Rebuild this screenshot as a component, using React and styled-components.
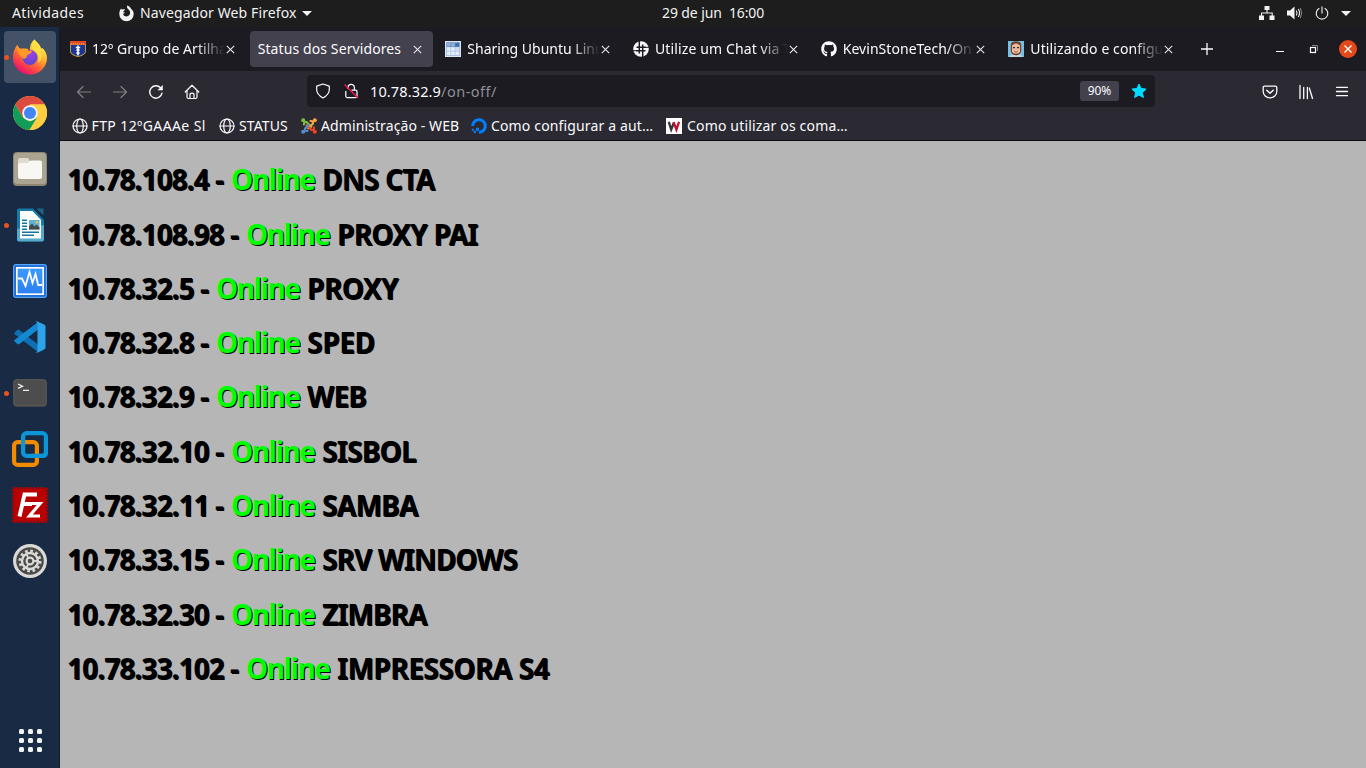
import React from "react";
import styled, { createGlobalStyle } from "styled-components";
import { FaGithub, FaDigitalOcean } from "react-icons/fa";

const GlobalStyle = createGlobalStyle`
  * { box-sizing: border-box; }
  body { margin: 0; overflow: hidden; font-family: "Noto Sans", "Open Sans", sans-serif; font-size: 14px; color: #fbfbfe; }
  svg { display: block; flex: none; }
`;

const Desktop = styled.div`
  width: 1366px;
  height: 768px;
  display: flex;
  flex-direction: column;
  background: #1d1d1d;
`;

const Text = styled.span`
  white-space: nowrap;
  letter-spacing: ${(p) => p.$track || 0}px;
  font-size: ${(p) => p.$size || 14}px;
  color: ${(p) => p.$color || "inherit"};
`;

/* ---------- GNOME top bar ---------- */

const TopBar = styled.header`
  height: 27px;
  display: grid;
  grid-template-columns: 650px auto 1fr;
  align-items: center;
  line-height: 26px;
  background: #1d1d1d;
  color: #f2f2f2;
  padding: 0 15px 1px 12px;
`;
const TopLeft = styled.div`
  display: flex;
  align-items: center;
`;
const AppMenu = styled.div`
  display: flex;
  align-items: center;
  gap: 5px;
  margin-left: 34px;
`;
const TopRight = styled.div`
  display: flex;
  align-items: center;
  justify-content: flex-end;
  gap: 12px;
`;

/* ---------- Dock ---------- */

const Body = styled.div`
  flex: 1;
  display: flex;
  min-height: 0;
`;
const Dock = styled.nav`
  width: 60px;
  background: #192a44;
  border-right: 1px solid #151a24;
  padding: 4px 3px 0 4px;
  display: flex;
  flex-direction: column;
  gap: 4px;
`;
const DockItem = styled.div`
  position: relative;
  width: 52px;
  height: 52px;
  flex: none;
  border-radius: 4px;
  display: flex;
  align-items: center;
  justify-content: center;
  background: ${(p) => (p.$active ? "#445267" : "transparent")};
  &::before {
    content: "";
    display: ${(p) => (p.$running ? "block" : "none")};
    position: absolute;
    left: 0;
    top: 24px;
    width: 5px;
    height: 5px;
    border-radius: 50%;
    background: #e95420;
  }
`;
const AppsButton = styled(DockItem)`
  margin-top: auto;
  margin-bottom: 2px;
`;
const DotGrid = styled.div`
  display: grid;
  grid-template-columns: repeat(3, 5px);
  grid-auto-rows: 5px;
  gap: 4px;
`;
const Dot = styled.i`
  border-radius: 1.5px;
  background: #f4f4f4;
`;

/* ---------- Browser ---------- */

const Browser = styled.main`
  flex: 1;
  min-width: 0;
  display: flex;
  flex-direction: column;
`;
const TabStrip = styled.div`
  height: 44px;
  background: #1c1b22;
  display: flex;
  align-items: center;
  padding: 0 9px 0 2px;
`;
const TabList = styled.div`
  display: flex;
  gap: 4px;
  width: 1122px;
`;
const Tab = styled.div`
  flex: 1 1 0;
  min-width: 0;
  height: 36px;
  padding: 0 11px 0 8px;
  border-radius: 4px;
  display: flex;
  align-items: center;
  background: ${(p) => (p.$active ? "#42414d" : "transparent")};
`;
const Favicon = styled.span`
  width: 16px;
  height: 16px;
  flex: none;
  margin-right: 6px;
`;
const TabTitle = styled.div`
  flex: 1;
  min-width: 0;
  overflow: hidden;
  line-height: 20px;
  padding-bottom: 1px;
  mask-image: ${(p) => (p.$fade ? "linear-gradient(to left, transparent 1px, #000 30px)" : "none")};
`;
const NewTab = styled.div`
  width: 46px;
  display: flex;
  justify-content: center;
`;
const WindowButtons = styled.div`
  margin-left: auto;
  display: flex;
  align-items: center;
  gap: 24px;
`;
const CloseWindow = styled.span`
  width: 18px;
  height: 18px;
  margin-left: -4px;
  border-radius: 50%;
  background: #e4491a;
  display: grid;
  place-items: center;
`;

const NavBar = styled.div`
  height: 41px;
  background: #2b2a33;
  display: flex;
  align-items: center;
  padding: 0 16px;
`;
const ButtonGroup = styled.div`
  display: flex;
  gap: 20px;
`;
const UrlBar = styled.div`
  width: 848px;
  height: 32px;
  margin: 0 auto 1px 107px;
  border-radius: 4px;
  background: #1c1b22;
  display: flex;
  align-items: center;
  gap: 12px;
  padding: 0 8px;
`;
const UrlText = styled.div`
  flex: 1;
  margin-left: -1px;
  line-height: 20px;
`;
const ZoomBadge = styled.span`
  width: 39px;
  height: 20px;
  border-radius: 3px;
  background: #42414d;
  font-size: 12px;
  line-height: 20px;
  text-align: center;
`;
const Bookmarks = styled.div`
  height: 29px;
  background: #2b2a33;
  border-bottom: 1px solid #0c0c0d;
  display: flex;
  align-items: center;
  padding: 0 12px;
  gap: 12px;
`;
const Bookmark = styled.div`
  display: flex;
  align-items: center;
  gap: ${(p) => p.$gap || 4}px;
  line-height: 20px;
  width: ${(p) => p.$width}px;
`;

/* ---------- Page ---------- */

const Page = styled.section`
  flex: 1;
  background: #b6b6b6;
  padding: 19.3px 7px 0;
  color: #000;
`;
const ServerLine = styled.h1`
  margin: 0 0 19.3px;
  height: 35px;
  line-height: 39px;
  font-size: 28px;
  font-weight: 700;
  white-space: nowrap;
  text-shadow: 1px 1px 0 #000;
  display: flex;
`;
const Address = styled.span`
  width: ${(p) => p.$width}px;
  letter-spacing: -0.92px;
`;
const Status = styled.span`
  width: 91px;
  color: #0f0;
  letter-spacing: -1.4px;
`;
const ServerName = styled.span`
  letter-spacing: ${(p) => p.$track}px;
`;

/* ---------- Icons ---------- */

const Stroke = ({ size = 16, children, color = "#fbfbfe", w = 1.2, opacity = 1 }) => (
  <svg width={size} height={size} viewBox="0 0 16 16" fill="none" stroke={color} strokeWidth={w} strokeLinecap="round" strokeLinejoin="round" opacity={opacity}>
    {children}
  </svg>
);

const CloseX = () => (
  <svg width="9" height="9" viewBox="0 0 9 9" stroke="#e6e6ea" strokeWidth="1.1">
    <path d="M.8.8l7.4 7.4M8.2.8L.8 8.2" />
  </svg>
);

const FirefoxSymbolic = () => (
  <svg width="17" height="17" viewBox="0 0 17 17">
    <path fill="#f2f2f2" d="M9.2.5c2.9 1 3.2 2.3 4 3.5 1.6 1.4 2.5 3 2.5 5.1a7.2 7.2 0 0 1-14.4 0c0-2.3.6-4.1 1.7-5.6.2.6.5.9 1 1.1C5 4.100 6 4.200 7 4.600c-.2.9-.9 1.300-1.800 1.800.2 1 .9 1 1.800 1.100-.3.9-1.100.9-1.900 1.400.6 1.800 2 2.500 3.500 2.500 2.100 0 3.500-1.500 3.500-3.600 0-2-.9-2.700-2.100-3.800C9.100 3 8.700 2 9.200.5z" />
  </svg>
);

const FirefoxLogo = () => (
  <svg width="36" height="36" viewBox="0 0 36 36">
    <defs>
      <linearGradient id="ffBody" x1=".8" y1=".1" x2=".25" y2=".95">
        <stop offset="0" stopColor="#fff14f" />
        <stop offset=".35" stopColor="#ffae2c" />
        <stop offset=".65" stopColor="#ff5a3a" />
        <stop offset="1" stopColor="#ee0d6e" />
      </linearGradient>
      <radialGradient id="ffGlobe" cx=".5" cy=".25" r=".8">
        <stop offset="0" stopColor="#a341e8" />
        <stop offset="1" stopColor="#5249c9" />
      </radialGradient>
    </defs>
    <path fill="url(#ffBody)" d="M22.500.5c1 1.500 5.500 4.500 6.800 9 .7.300 1.300-.5 1.300-.5 3 3 4.400 7 4.400 10A17 16.600 0 0 1 1 19C1 13 2.700 9.500 5.200 5.800L7.500 10l7.500-.5 3 3c-.5-4 .5-9 4.500-12z" />
    <circle cx="18" cy="18.500" r="7.500" fill="url(#ffGlobe)" />
    <path fill="#ff9a25" d="M5.200 5.800C6 8 7 9.200 8.700 9.700c2-.6 4.800-.2 6.800 1.700l4.600.700c-.6 2.600-3.300 2.900-5.300 4.400.3 1.500-.7 2.800-2.800 3.400C8 17.500 4.500 13 5.200 5.800z" />
    <path fill="#ffe141" fillOpacity=".8" d="M22.500.5c2.500 4 7.500 7.500 7.500 15.500 0 4-2 7-4 8 1.500-5 .5-9-5-13.500C18.800 8.500 19.500 4 22.500.5z" />
  </svg>
);

const ChromeLogo = () => (
  <svg width="34" height="34" viewBox="0 0 34 34">
    <circle cx="17" cy="17" r="17" fill="#ffcd40" />
    <path fill="#dd4b3e" d="M2.300 8.500A17 17 0 0 1 31.700 8.500H17L9.600 21.300z" />
    <path fill="#109d58" d="M2.300 8.500L9.600 21.300 17 25.500 24.400 21.200 16.500 34A17 17 0 0 1 2.300 8.500z" />
    <path fill="#ffcd40" d="M31.700 8.500A17 17 0 0 1 16.500 34L24.400 21.200 17 8.500z" />
    <circle cx="17" cy="17" r="7.800" fill="#f3f3f3" />
    <circle cx="17" cy="17" r="6" fill="#4285f4" />
  </svg>
);

const FilesIcon = () => (
  <svg width="34" height="34" viewBox="0 0 34 34">
    <rect width="34" height="34" rx="4" fill="#8d8673" />
    <rect x="1" y="1" width="32" height="31" rx="3.500" fill="#aaa490" />
    <path fill="#dedbd0" d="M5 8q0-2 2-2h7q2 0 2.500 2.500L18 10v6H5z" />
    <path fill="#f8f7f4" d="M5 13q0-2 2-2h6q2 0 3.500-1.500T19 8.500h8q2 0 2 2V25q0 2-2 2H7q-2 0-2-2z" />
  </svg>
);

const WriterIcon = () => (
  <svg width="36" height="36" viewBox="0 0 36 36">
    <path fill="#147ba7" d="M7 1.500h14L32 13v19.500a2 2 0 0 1-2 2H7a2 2 0 0 1-2-2v-29a2 2 0 0 1 2-2z" />
    <path fill="#74bdd9" d="M5 22v10.500a2 2 0 0 0 2 2h23a2 2 0 0 0 2-2V18z" fillOpacity=".7" />
    <path fill="#fbfcfc" d="M8 4h12.500L29 13v18.500H8z" />
    <path fill="#1d6486" d="M24.500 1.500h7V8.500z" />
    <path stroke="#18739d" strokeWidth="1.400" d="M10 13.200h5M10 16.200h5M10 19.200h5M10 22.200h5M10 25.200h17M10 28.200h12" />
    <rect x="17" y="13" width="10.500" height="9.500" fill="#5fb1d7" />
    <path fill="#454a4d" d="M17 22.500v-3l3-3 2.500 3 2-2 3 3v2z" />
    <circle cx="25" cy="15.300" r="1.300" fill="#f5c74c" />
  </svg>
);

const MonitorIcon = () => (
  <svg width="34" height="34" viewBox="0 0 34 34">
    <defs>
      <linearGradient id="mon" x1="0" y1="0" x2="0" y2="1">
        <stop offset="0" stopColor="#3b9bff" />
        <stop offset="1" stopColor="#2d7ff0" />
      </linearGradient>
    </defs>
    <rect width="34" height="34" rx="2.500" fill="#1768d8" />
    <rect x=".7" y=".7" width="32.600" height="32.600" rx="2" fill="none" stroke="#69b5f7" strokeWidth="1" />
    <rect x="3.800" y="3.800" width="26.400" height="26.400" fill="url(#mon)" stroke="#fff" strokeWidth="1.700" />
    <path fill="none" stroke="#fff" strokeWidth="1.800" d="M5 14.500h4l3.500 7.500 4-14 3 11 3-9 2.700 11h4" />
  </svg>
);

const CodeIcon = () => (
  <svg width="34" height="34" viewBox="0 0 34 34">
    <path fill="#0f6fb5" d="M1.500 12.500l2.800-2.500q1-.8 2 0L25 24.500V32L1.500 14q-.8-.8 0-1.500z" />
    <path fill="#1389d2" d="M1.500 21.500l2.800 2.500q1 .8 2 0L25 9.500V2L1.500 20q-.8.800 0 1.500z" />
    <path fill="#2ea3ea" d="M24 32.500q-1 .2-1.500-.5 2 .5 2-1.500v-27q0-2-2-1.500.8-1 2-.5l7 3.200q1 .6 1 1.800v21q0 1.200-1 1.800l-6.500 3.200z" />
  </svg>
);

const TerminalIcon = () => (
  <svg width="34" height="28" viewBox="0 0 34 28">
    <rect width="34" height="28" rx="3.500" fill="#3b3b3b" />
    <rect x=".8" y=".8" width="32.400" height="26" rx="3" fill="#4d4d4d" stroke="#626262" strokeWidth=".8" />
    <path d="M5 5l4.500 2.200L5 9.400M10 11.400h6" fill="none" stroke="#eee" strokeWidth="1.300" />
  </svg>
);

const VmwareIcon = () => (
  <svg width="36" height="36" viewBox="0 0 36 36" fill="none" strokeWidth="4.200">
    <rect x="11.100" y="2.100" width="22.800" height="22.800" rx="3.500" stroke="#0c95d7" />
    <rect x="2.100" y="11.100" width="22.800" height="22.800" rx="3.500" stroke="#f38b00" />
    <path d="M20 24.900h10.400q3.500 0 3.500-3.500" stroke="#0c95d7" />
    <path d="M11.100 9v6" stroke="#0c95d7" />
  </svg>
);

const FilezillaIcon = () => (
  <svg width="36" height="36" viewBox="0 0 36 36">
    <rect x="1.500" y="1.500" width="33" height="33" fill="#b80000" />
    <rect x="1" y="1" width="34" height="34" fill="none" stroke="#b80000" strokeWidth="1.800" strokeDasharray="2 1.400" />
    <g fill="none" stroke="#fff" strokeLinejoin="miter">
      <path strokeWidth="4" d="M7.500 29.500L12.500 7.500H25M10.500 17H20" />
      <path strokeWidth="3.200" d="M17.500 16.500H28L17.500 29H28" />
    </g>
  </svg>
);

const SettingsIcon = () => (
  <svg width="34" height="34" viewBox="0 0 34 34">
    <circle cx="17" cy="17" r="17" fill="#d9d9d7" />
    <circle cx="17" cy="17" r="13.800" fill="#4a4a48" />
    <circle cx="17" cy="17" r="10" fill="none" stroke="#d9d9d7" strokeWidth="3" strokeDasharray="2.600 2.636" />
    <circle cx="17" cy="17" r="8" fill="none" stroke="#d9d9d7" strokeWidth="2.400" />
    <circle cx="17" cy="17" r="3.400" fill="none" stroke="#d9d9d7" strokeWidth="2.200" />
    <path stroke="#d9d9d7" strokeWidth="1.800" d="M20 17h5M15.500 19.600l-2 4M15.500 14.400l-2-4" />
  </svg>
);

const CrestFavicon = () => (
  <svg width="16" height="16" viewBox="0 0 16 16">
    <path fill="#d8b73a" d="M0 3h16v7q0 4-8 6-8-2-8-6z" />
    <path fill="#1c3597" d="M.8 4h14.400v6q0 3.500-7.200 5.200Q.8 13.500.8 10z" />
    <path fill="#e5472d" d="M0 0h16v3.600H0z" />
    <path stroke="#f5c451" strokeWidth=".8" strokeDasharray="1 1" d="M1 2.700h14" />
    <path stroke="#fff" strokeWidth="1.600" d="M8 4.500v10M5.800 6.500h4.400M6.300 9h3.400M6.300 12h3.400" />
  </svg>
);
const GridFavicon = () => (
  <svg width="16" height="16" viewBox="0 0 16 16">
    <rect x=".5" y=".5" width="15" height="15" fill="#a9c0de" stroke="#dce7f3" />
    <path fill="#5d87bd" d="M1.500 1.500h13V6h-13z" />
    <g fill="#e3edf7">
      <path fillOpacity=".4" d="M2 2h3.500v3.500H2zM6.200 2h3.500v3.500H6.200z" />
      <path d="M2 6.200h3.500v3.500H2zM6.200 6.200h3.500v3.500H6.200zM2 10.400h3.500V14H2zM6.200 10.400h3.500V14H6.200zM10.400 10.400H14V14h-3.600z" />
      <path fillOpacity=".7" d="M10.400 6.200H14v3.500h-3.600z" />
    </g>
    <path fill="#3e70b0" d="M10.400 2H14v3.500h-3.600z" />
  </svg>
);
const HashFavicon = () => (
  <svg width="16" height="16" viewBox="0 0 16 16">
    <circle cx="8" cy="8" r="7.800" fill="#fbfbfe" />
    <path stroke="#1c1b22" strokeWidth="1.500" d="M6.300 0v12.500M9.700 3.500V16M3.500 6.300h9.500M3 9.700h9.500" />
    <path stroke="#1c1b22" strokeWidth="1" d="M0 9.700h3M13 6.300h3" />
  </svg>
);
const AvatarFavicon = () => (
  <svg width="16" height="16" viewBox="0 0 16 16">
    <rect width="16" height="16" fill="#78bfe6" />
    <path fill="#c9d6de" d="M1.500 16q1-3 6.500-3t6.500 3z" />
    <path fill="#70452f" d="M2.800 4q0-3.700 5.200-3.700T13.200 4v6q-1 4.300-5.200 4.300T2.800 10z" />
    <path fill="#eeb99a" d="M4 4.500q2-2 4-2t4 2v5.800q-.5 2.300-4 2.300t-4-2.300z" />
    <path fill="#3c2a22" d="M5 6h2v1.200H5zM9 6h2v1.200H9z" />
    <path fill="#b5654f" d="M6.300 10.200h3.400v1H6.300z" />
  </svg>
);
const Globe = () => (
  <Stroke size={16} w={1.2}>
    <circle cx="8" cy="8" r="7" />
    <ellipse cx="8" cy="8" rx="3.300" ry="7" />
    <path d="M1 8h14" />
  </Stroke>
);
const JoomlaIcon = () => (
  <svg width="16" height="16" viewBox="0 0 16 16" fill="none" strokeWidth="2.100" strokeLinecap="butt">
    <path stroke="#7ac143" d="M3 7.300Q2.500 3.500 5.500 4L11 9.500" />
    <path stroke="#f9a541" d="M8.700 3Q12.500 2.500 12 5.500L6.500 11" />
    <path stroke="#f44321" d="M13 8.700Q13.500 12.500 10.500 12L5 6.500" />
    <path stroke="#5091cd" d="M7.300 13Q3.500 13.500 4 10.500L8 6.500" />
    <g stroke="none">
      <circle cx="2.200" cy="2.300" r="2" fill="#7ac143" />
      <circle cx="13.800" cy="2.300" r="2" fill="#f9a541" />
      <circle cx="13.800" cy="13.700" r="2" fill="#f44321" />
      <circle cx="2.200" cy="13.700" r="2" fill="#5091cd" />
    </g>
  </svg>
);
const WIcon = () => (
  <svg width="16" height="16" viewBox="0 0 16 16">
    <rect width="16" height="16" fill="#fff" />
    <path fill="none" stroke="#33333a" strokeWidth="2.300" d="M2.800 3.800L5.200 11.500 8 4.500" />
    <path fill="none" stroke="#c8102e" strokeWidth="2.300" d="M7.600 4.200L10.400 11.500 13 3.800" />
  </svg>
);

/* ---------- Data ---------- */

const dockItems = [
  { icon: <FirefoxLogo />, running: true, active: true },
  { icon: <ChromeLogo /> },
  { icon: <FilesIcon /> },
  { icon: <WriterIcon />, running: true },
  { icon: <MonitorIcon /> },
  { icon: <CodeIcon /> },
  { icon: <TerminalIcon />, running: true },
  { icon: <VmwareIcon /> },
  { icon: <FilezillaIcon /> },
  { icon: <SettingsIcon /> },
];

const tabs = [
  { icon: <CrestFavicon />, title: "12º Grupo de Artilharia", track: 0.05 },
  { title: "Status dos Servidores", active: true, track: 0.1 },
  { icon: <GridFavicon />, title: "Sharing Ubuntu Linux", track: 0 },
  { icon: <HashFavicon />, title: "Utilize um Chat via Terminal", track: 0.12 },
  { icon: <FaGithub size={16} />, title: "KevinStoneTech/On-Off", track: 0.05 },
  { icon: <AvatarFavicon />, title: "Utilizando e configurando", track: 0.1 },
];

const bookmarks = [
  { icon: <Globe />, title: "FTP 12ºGAAAe Sl", width: 135, track: 0.4, gap: 3.5 },
  { icon: <Globe />, title: "STATUS", width: 70, track: 0.1 },
  { icon: <JoomlaIcon />, title: "Administração - WEB", width: 158, track: 0.1 },
  { icon: <FaDigitalOcean size={16} color="#0080ff" />, title: "Como configurar a aut…", width: 183, track: 0.15 },
  { icon: <WIcon />, title: "Como utilizar os coma…", width: 183, track: 0.17, gap: 5 },
];

const servers = [
  ["10.78.108.4", "DNS CTA", 164, -0.75],
  ["10.78.108.98", "PROXY PAI", 179, -0.75],
  ["10.78.32.5", "PROXY", 149, -0.5],
  ["10.78.32.8", "SPED", 149, -0.3],
  ["10.78.32.9", "WEB", 149, -0.7],
  ["10.78.32.10", "SISBOL", 164, -0.7],
  ["10.78.32.11", "SAMBA", 164, -0.7],
  ["10.78.33.15", "SRV WINDOWS", 164, -0.9],
  ["10.78.32.30", "ZIMBRA", 164, -0.9],
  ["10.78.33.102", "IMPRESSORA S4", 179, -0.48],
];

export default function App() {
  return (
    <Desktop>
      <GlobalStyle />
      <TopBar>
        <TopLeft>
          <Text $track={0.4}>Atividades</Text>
          <AppMenu>
            <FirefoxSymbolic />
            <Text $track={0.12}>Navegador Web Firefox</Text>
            <svg width="10" height="5" viewBox="0 0 10 5"><path d="M0 0h10L5 5z" fill="#f2f2f2" /></svg>
          </AppMenu>
        </TopLeft>
        <Text $track={-0.1}>29 de jun&nbsp; 16:00</Text>
        <TopRight>
          <svg width="16" height="14" viewBox="0 0 16 14" fill="#f2f2f2">
            <path d="M5.500 0h5v4h-5zM0 9.500h5V14H0zM10.500 9.500h5V14h-5z" />
            <path d="M8 4v3M2.500 10V7h10.700v3" fill="none" stroke="#f2f2f2" strokeWidth="1.100" />
          </svg>
          <svg width="16" height="14" viewBox="0 0 16 14">
            <path fill="#f2f2f2" d="M0 4.500h3L7.500.5v13L3 9.500H0z" />
            <path fill="none" stroke="#f2f2f2" strokeWidth="1.100" d="M9.300 4.500q1.500 2.500 0 5M11.300 3q2.500 4 0 8" />
            <path fill="none" stroke="#8d8d8d" strokeWidth="1" d="M13.300 2q2.800 5 0 10" />
          </svg>
          <svg width="14" height="15" viewBox="0 0 15 15" fill="none" stroke="#f2f2f2" strokeWidth="1.200">
            <path d="M7.500 0v7.500M4.700 1.800a6.200 6.200 0 1 0 5.600 0" />
          </svg>
          <svg width="10" height="5" viewBox="0 0 10 5"><path d="M0 0h10L5 5z" fill="#f2f2f2" /></svg>
        </TopRight>
      </TopBar>
      <Body>
        <Dock>
          {dockItems.map((d, i) => (
            <DockItem key={i} $active={d.active} $running={d.running}>{d.icon}</DockItem>
          ))}
          <AppsButton>
            <DotGrid>{Array.from({ length: 9 }, (_, i) => <Dot key={i} />)}</DotGrid>
          </AppsButton>
        </Dock>
        <Browser>
          <TabStrip>
            <TabList>
              {tabs.map((t) => (
                <Tab key={t.title} $active={t.active}>
                  {t.icon && <Favicon>{t.icon}</Favicon>}
                  <TabTitle $fade={!t.active}><Text $track={t.track}>{t.title}</Text></TabTitle>
                  <CloseX />
                </Tab>
              ))}
            </TabList>
            <NewTab>
              <svg width="12" height="12" viewBox="0 0 12 12" stroke="#fbfbfe" strokeWidth="1.300"><path d="M6 0v12M0 6h12" /></svg>
            </NewTab>
            <WindowButtons>
              <svg width="10" height="10" viewBox="0 0 10 10"><path d="M1 7h8v1H1z" fill="#fff" /></svg>
              <svg width="10" height="10" viewBox="0 0 10 10" fill="none">
                <path d="M3 1.500h5.500V7" stroke="#85858b" />
                <rect x="1.500" y="3.500" width="5" height="5" stroke="#fff" strokeWidth="1.200" />
              </svg>
              <CloseWindow>
                <svg width="8" height="8" viewBox="0 0 8 8" stroke="#fff" strokeWidth="1.400"><path d="M.5.5l7 7M7.500.5l-7 7" /></svg>
              </CloseWindow>
            </WindowButtons>
          </TabStrip>
          <NavBar>
            <ButtonGroup>
              <Stroke opacity={0.4}><path d="M14.500 8H1.500M7 2.500L1.500 8 7 13.500" /></Stroke>
              <Stroke opacity={0.4}><path d="M1.500 8h13M9 2.500L14.500 8 9 13.500" /></Stroke>
              <Stroke w={1.400}>
                <path d="M14 9.200A6.200 6.200 0 1 1 12.500 3.800" />
                <path d="M14.500 1.800V6H10.300z" fill="#fbfbfe" strokeWidth=".6" />
              </Stroke>
              <Stroke>
                <path d="M1.200 8L8 1.300 14.800 8M3 6.500V13q0 1.500 1.500 1.500h7Q13 14.500 13 13V6.500" />
                <path d="M6 14.500V11q0-1.800 2-1.800t2 1.800v3.500" />
              </Stroke>
            </ButtonGroup>
            <UrlBar>
              <Stroke><path d="M8 1l6.300 2.100v3.500q0 5-6.300 8.400-6.300-3.400-6.300-8.400V3.100z" /></Stroke>
              <svg width="16" height="16" viewBox="0 0 16 16" fill="none" strokeWidth="1.250">
                <path stroke="#fbfbfe" d="M5 6V4.500a3.200 3.200 0 0 1 6.400 0V7.200M2.800 8V13q0 1.500 1.500 1.500h8.200Q14 14.500 14 13V9q0-1.800-1.500-1.800H8.500" />
                <path stroke="#f0174c" strokeWidth="1.400" d="M1.500 1.500l13.500 13.500" />
              </svg>
              <UrlText>
                <Text $size={14.5} $track={0.13}>10.78.32.9</Text>
                <Text $size={14.5} $track={0.5} $color="#8f8f96">/on-off/</Text>
              </UrlText>
              <ZoomBadge>90%</ZoomBadge>
              <svg width="16" height="16" viewBox="0 0 16 16">
                <path fill="#00ddff" stroke="#00ddff" strokeLinejoin="round" d="M8 1l2.100 4.500 5 .6-3.700 3.400 1 5L8 12.100l-4.400 2.400 1-5L.9 6.100l5-.6z" />
              </svg>
            </UrlBar>
            <ButtonGroup>
              <Stroke w={1.300}>
                <path d="M2.500 2.200h11q1.300 0 1.300 1.300V7.500a6.800 6.300 0 0 1-13.600 0v-4q0-1.300 1.300-1.300z" />
                <path d="M4.800 6.200L8 9.200l3.200-3" strokeWidth="1.500" />
              </Stroke>
              <Stroke w={1.300}><path d="M2 1.500v13M5.700 3.500v11M9.400 3.500v11M11.300 4l3.200 10.500" /></Stroke>
              <Stroke w={1.300}><path d="M2.500 3.300h11M2.500 7.500h11M2.500 11.700h11" /></Stroke>
            </ButtonGroup>
          </NavBar>
          <Bookmarks>
            {bookmarks.map((b, i) => (
              <Bookmark key={i} $width={b.width} $gap={b.gap}>
                {b.icon}
                <Text $track={b.track}>{b.title}</Text>
              </Bookmark>
            ))}
          </Bookmarks>
          <Page>
            {servers.map(([ip, name, width, track]) => (
              <ServerLine key={ip}>
                <Address $width={width}>{ip} - </Address>
                <Status>Online</Status>
                <ServerName $track={track}>{name}</ServerName>
              </ServerLine>
            ))}
          </Page>
        </Browser>
      </Body>
    </Desktop>
  );
}
